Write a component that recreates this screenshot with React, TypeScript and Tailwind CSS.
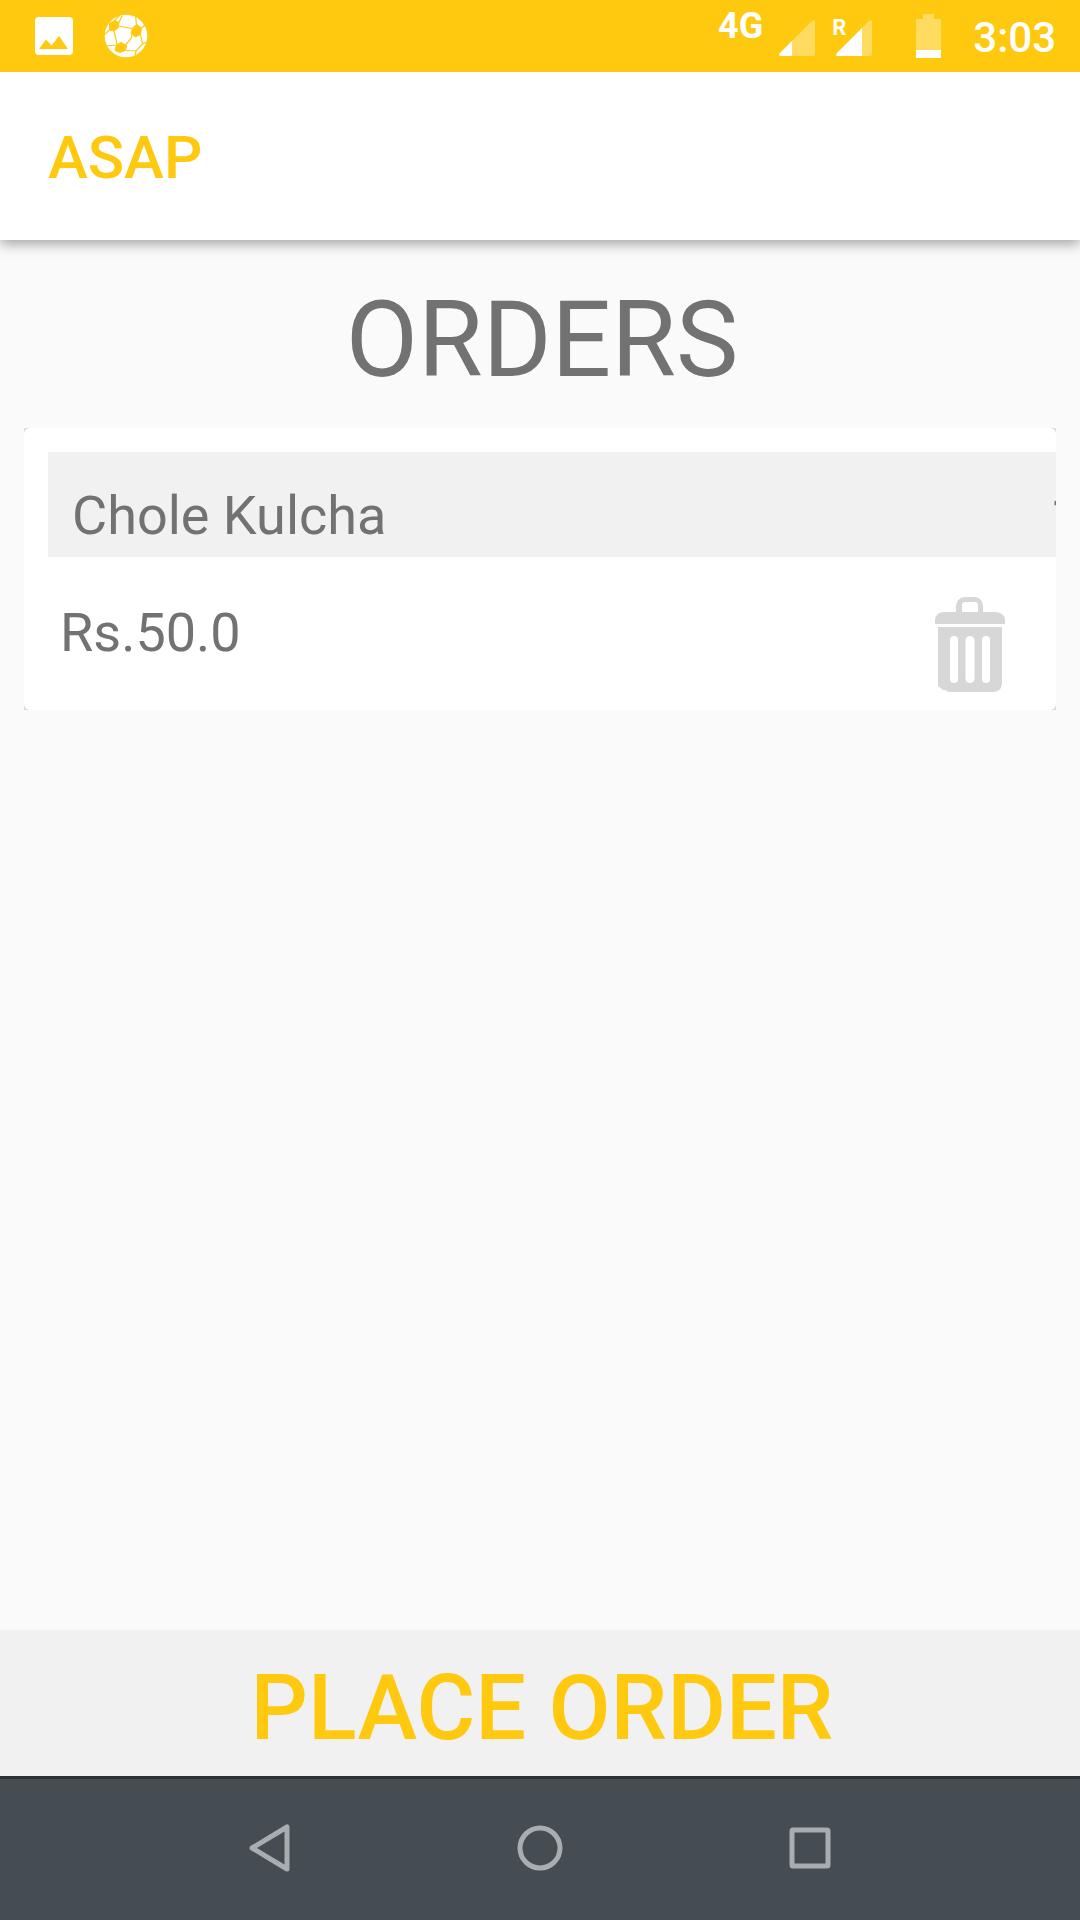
import React from "react";

function PictureIcon() {
  return (
    <svg className="h-10 w-10" viewBox="0 0 40 40" aria-hidden="true">
      <path
        fill="#fff"
        fillRule="evenodd"
        d="M5 1H35Q39 1 39 5V35Q39 39 35 39H5Q1 39 1 35V5Q1 1 5 1ZM5 33H34L25 20L17.600 29.500L12 23.500Z"
      />
    </svg>
  );
}

function BallIcon() {
  return (
    <svg className="h-11 w-11" viewBox="0 0 44 44" aria-hidden="true">
      <circle cx="22" cy="22" r="21.300" fill="#fff" />
      <g fill="#ffc910" stroke="#ffc910" strokeWidth="1" strokeLinejoin="round">
        <path d="M5.500 9.500L11 6.500L15 8.500L14 14L10 17L5.500 16Z" />
        <path d="M28.500 14L33 10.500L37.500 14L36.500 20.500L31.500 23L27 19.500Z" />
        <path d="M12.500 31L17 28.500L22.500 31.500L21.500 36.500L16 38.500L11 36.500Z" />
      </g>
      <g fill="none" stroke="#ffc910" strokeWidth="1.200">
        <path d="M10 7L16 1M15 8.500L18 2M14 12L28 14.500M32.500 11L31.500 1M37.500 14L41 11M36.500 20.500L38.500 30L43 28M38.500 30L32 37L22 36.500M32 37L31 42M28 20L27.500 24L21.500 31M10 17L12.500 28L13 31M5.500 16L0 21M13 31L1 32" />
      </g>
    </svg>
  );
}

function SignalIcon({ level }: { level: number }) {
  return (
    <svg className="h-9 w-9" viewBox="0 0 36 36" aria-hidden="true">
      <path fill="#ffdc60" d="M2 36Q-1 36 1 33L33 1Q36 -1 36 2V34Q36 36 34 36Z" />
      <path fill="#fff" d={`M2 36Q-1 36 1 33L${level} ${34 - level}V36Z`} />
    </svg>
  );
}

function BatteryIcon() {
  return (
    <svg className="h-11 w-[25px]" viewBox="0 0 25 44" aria-hidden="true">
      <path fill="#ffdc60" d="M7 0H18V5H25V36H0V5H7Z" />
      <path fill="#fff" d="M0 36H25V44H0Z" />
    </svg>
  );
}

function TrashIcon() {
  return (
    <svg className="h-24 w-[70px]" viewBox="0 0 70 96" aria-hidden="true">
      <g fill="#d7d7d7" fillRule="evenodd">
        <path d="M0 27V23Q1 15 9 15H21V9Q22 0 31 0H39Q47 0 48 9V15H60Q69 15 70 23V27ZM27 15H43V8Q43 5 40 5H30Q27 5 27 8Z" />
        <path d="M3 30H67V87Q66 95 58 95H14L10 93H8L3 89ZM15 43V82A4 4 0 0 0 23 82V43A4 4 0 0 0 15 43ZM30.500 43V82A4.500 4 0 0 0 39.500 82V43A4.500 4 0 0 0 30.500 43ZM47 43V82A4 4 0 0 0 55 82V43A4 4 0 0 0 47 43Z" />
      </g>
    </svg>
  );
}

const navItems = [
  { label: "Back", shape: <path d="M6 24L41 3V45Z" /> },
  { label: "Home", shape: <circle cx="24" cy="24" r="20" /> },
  { label: "Recent apps", shape: <rect x="6" y="6" width="36" height="36" rx="1" /> },
];

export default function App() {
  return (
    <div className="flex min-h-screen flex-col bg-[#fafafa] font-['Roboto',sans-serif] text-[#727272]">
      <div className="relative z-10 flex h-[72px] items-center justify-between bg-[#ffc910] pr-6 pl-[34px] text-white">
        <div className="flex items-center gap-[30px]">
          <PictureIcon />
          <BallIcon />
        </div>
        <div className="flex items-center">
          <span className="mb-5 text-[36px] leading-10 font-bold">4G</span>
          <span className="mt-1 ml-4">
            <SignalIcon level={13} />
          </span>
          <span className="relative mt-1 ml-[21px]">
            <SignalIcon level={26} />
            <span className="absolute -top-1 -left-1 text-[22px] leading-6 font-bold">R</span>
          </span>
          <span className="ml-11">
            <BatteryIcon />
          </span>
          <time className="mt-1 ml-8 text-[42px] leading-[72px] font-medium">3:03</time>
        </div>
      </div>

      <header className="flex h-[168px] items-center bg-white px-12 shadow-[0_4px_12px_rgba(0,0,0,0.35)]">
        <h1 className="mt-1 text-[60px] leading-[72px] font-medium text-[#ffc910]">ASAP</h1>
      </header>

      <main className="flex-1 px-6 pt-[31px]">
        <h2 className="pl-1 text-center text-[105px] leading-[140px]">ORDERS</h2>
        <div className="mt-[17px] bg-[#dcdcdc]">
          <section className="overflow-hidden rounded-md bg-white pt-6">
            <div className="ml-6 flex overflow-hidden bg-[#f1f1f1] pt-7 pb-[5px] text-[54px] leading-[72px]">
              <span className="ml-6 w-[calc(100%-30px)] shrink-0">Chole Kulcha</span>
              <span className="shrink-0">1</span>
            </div>
            <div className="flex items-start justify-between pt-10 pr-[51px] pb-[17px] pl-9">
              <span className="text-[54px] leading-[72px]">Rs.50.0</span>
              <button type="button" aria-label="Remove Chole Kulcha">
                <TrashIcon />
              </button>
            </div>
          </section>
        </div>
      </main>

      <button
        type="button"
        className="h-[146px] bg-[#f1f1f1] pt-3 pl-1 text-[90px] leading-[120px] font-medium text-[#ffc910]"
      >
        PLACE ORDER
      </button>

      <nav className="flex h-36 justify-center border-t-[3px] border-[#2c3134] bg-[#454c52] pb-1">
        {navItems.map((item) => (
          <button
            key={item.label}
            type="button"
            aria-label={item.label}
            className="flex w-1/4 items-center justify-center"
          >
            <svg
              className="h-12 w-12"
              viewBox="0 0 48 48"
              fill="none"
              stroke="#a8adb0"
              strokeWidth="5"
              strokeLinejoin="round"
              aria-hidden="true"
            >
              {item.shape}
            </svg>
          </button>
        ))}
      </nav>
    </div>
  );
}
